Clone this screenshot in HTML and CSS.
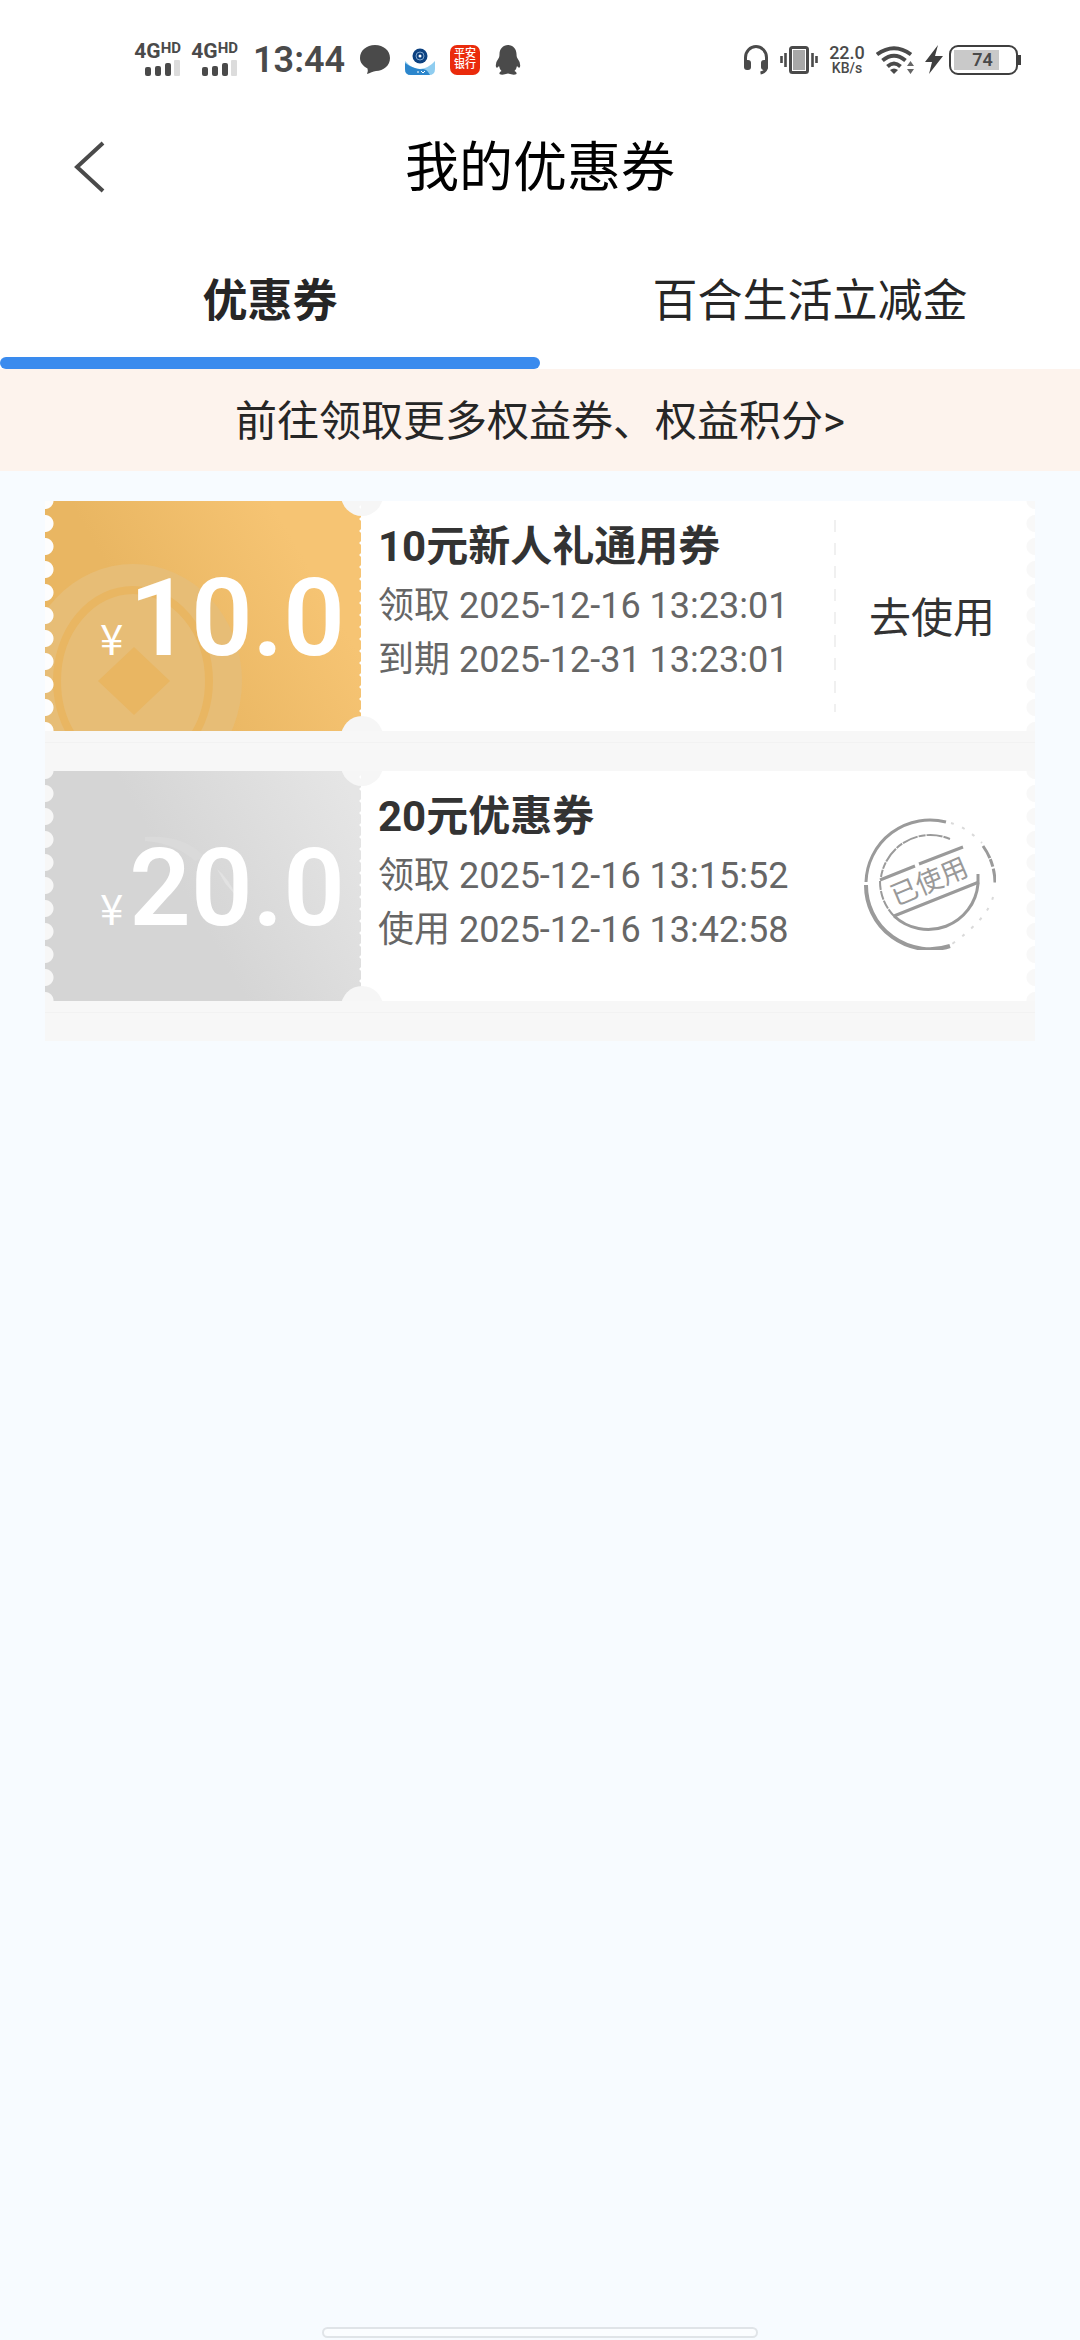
FILE: index.html
```html
<!DOCTYPE html>
<html lang="zh-CN">
<head>
<meta charset="utf-8">
<meta name="viewport" content="width=device-width, initial-scale=1">
<title>我的优惠券</title>
<link rel="stylesheet" href="styles.css">
</head>
<body>
<div class="statusbar">
  <div class="status-group status-left">
    <div class="signal">
      <span class="net">4G<span class="hd">HD</span></span>
      <svg width="36" height="18" viewBox="0 0 36 18" fill="#4a4a4a"><rect x="0" y="8" width="6" height="9" rx="2"/><rect x="10" y="7" width="6" height="10" rx="2"/><rect x="20" y="4" width="6" height="13" rx="2"/><rect x="29" y="1" width="6" height="16" rx="1" fill="#dcdcdc"/></svg>
    </div>
    <div class="signal">
      <span class="net">4G<span class="hd">HD</span></span>
      <svg width="36" height="18" viewBox="0 0 36 18" fill="#4a4a4a"><rect x="0" y="8" width="6" height="9" rx="2"/><rect x="10" y="7" width="6" height="10" rx="2"/><rect x="20" y="4" width="6" height="13" rx="2"/><rect x="29" y="1" width="6" height="16" rx="1" fill="#dcdcdc"/></svg>
    </div>
    <time class="clock">13:44</time>
    <svg width="30" height="30" viewBox="0 0 30 30" fill="#4a4a4a"><path d="M15 0C23.500 0 30 5.500 30 13S23.500 26 16 26C13 26 10 28.500 7 29Q8.500 26.500 7.500 23.500C3 21 0 17.500 0 13C0 5.500 6.500 0 15 0Z"/></svg>
    <svg width="30" height="30" viewBox="0 0 30 30"><path d="M0 16Q7 24 15 24Q24 23 30 16V24Q30 30 24 30H6Q0 30 0 24Z" fill="#8fcdf0"/><path d="M0 18Q10 25 18 24Q22 24 25 30H6Q0 30 0 24Z" fill="#2c86cc"/><circle cx="15" cy="11" r="7.500" fill="#0c4180"/><circle cx="15" cy="11" r="4" fill="none" stroke="#7fa6cf" stroke-width="1"/><circle cx="15" cy="11" r="1.500" fill="#fff"/><path d="M12 27h2M16 26l2 2 2-2" stroke="#fff" fill="none"/></svg>
    <span class="bank-icon"><span>平安</span><span>银行</span></span>
    <svg width="26" height="30" viewBox="0 0 26 30" fill="#4a4a4a"><path d="M13 0C18 0 21.500 4 21.500 9Q21.500 11 22 12.500Q26 18 25 22Q24 24 22 21Q21.500 24 19.500 26Q22 27 21.500 29Q19 30.500 13 28.500Q7 30.500 4.500 29Q4 27 6.500 26Q4.500 24 4 21Q2 24 1 22Q0 18 4 12.500Q4.500 11 4.500 9C4.500 4 8 0 13 0Z"/></svg>
  </div>
  <div class="status-group status-right">
    <svg width="26" height="30" viewBox="0 0 26 30"><path d="M2.500 19V12.500A10.500 11 0 0 1 23.500 12.500V21Q23.500 27 17.500 28" fill="none" stroke="#4a4a4a" stroke-width="3"/><rect x="1" y="15" width="7" height="10" rx="3" fill="#4a4a4a"/><rect x="18" y="15" width="7" height="10" rx="3" fill="#4a4a4a"/></svg>
    <svg width="38" height="30" viewBox="0 0 38 30"><rect x="10.500" y="2.500" width="17" height="25" rx="2" fill="#a8a8a8" stroke="#4a4a4a" stroke-width="3"/><rect x="12.500" y="4.500" width="13" height="21" fill="none" stroke="#fff"/><path d="M1.500 11v7M5.500 8v14M32.500 8v14M36.500 11v7" stroke="#4a4a4a" stroke-width="2.600"/></svg>
    <span class="speed"><span class="speed-value">22.0</span><span>KB/s</span></span>
    <svg width="38" height="30" viewBox="0 0 38 30"><g fill="none" stroke="#4a4a4a" stroke-width="4"><path d="M1 9.500Q18 -3 35 9.500"/><path d="M6.500 15.500Q18 6 29.500 15.500"/><path d="M11.500 21.500Q18 15.500 24.500 21.500"/></g><path d="M14 25Q18 22 22 25L18 29Z" fill="#4a4a4a"/><path d="M34.500 16l3.500 5h-7zM34.500 29l3.500-5h-7z" fill="#666"/></svg>
    <svg width="18" height="30" viewBox="0 0 18 30" fill="#3f3f3f"><path d="M13 0L0 17H7L4 29L18 11H10Z"/></svg>
    <span class="battery"><span class="battery-body"><span class="battery-level">74</span></span><span class="battery-tip"></span></span>
  </div>
</div>

<header class="navbar">
  <button class="back" type="button" aria-label="返回"><svg width="32" height="52" viewBox="0 0 32 52" fill="none" stroke="#4a4a4a" stroke-width="4"><path d="M29 2L3 26L29 50"/></svg></button>
  <h1 class="title">我的优惠券</h1>
</header>

<nav class="tabs">
  <button class="tab tab-active" type="button">优惠券</button>
  <button class="tab" type="button">百合生活立减金</button>
</nav>

<a class="notice" href="#">前往领取更多权益券、权益积分&gt;</a>

<main>
  <ul class="coupons">
    <li class="slot">
      <article class="coupon">
        <div class="stub">
          <svg class="coin" width="316" height="230" viewBox="0 0 316 230"><ellipse cx="88" cy="180" rx="109" ry="117" fill="#e7bd76"/><ellipse cx="88" cy="180" rx="76" ry="91" fill="none" stroke="#e9b662" stroke-width="8"/><path d="M89 146L125 180L89 214L53 180Z" fill="#e9b662"/></svg>
          <p class="amount"><span class="yen">¥</span>10.0</p>
        </div>
        <div class="info">
          <h2 class="name">10元新人礼通用券</h2>
          <p class="date">领取 2025-12-16 13:23:01</p>
          <p class="date">到期 2025-12-31 13:23:01</p>
        </div>
        <div class="action action-open"><button class="use" type="button">去使用</button></div>
      </article>
    </li>
    <li class="slot">
      <article class="coupon coupon-used">
        <div class="stub">
          <svg class="coin" width="316" height="230" viewBox="0 0 316 230"><path d="M100 66Q140 64 160 86L150 90Q130 72 100 70Z" fill="#dadada"/><path d="M172 98Q184 108 191 125L180 112Z" fill="#e2e2e2"/></svg>
          <p class="amount"><span class="yen">¥</span>20.0</p>
        </div>
        <div class="info">
          <h2 class="name">20元优惠券</h2>
          <p class="date">领取 2025-12-16 13:15:52</p>
          <p class="date">使用 2025-12-16 13:42:58</p>
        </div>
        <div class="action">
          <svg class="stamp" width="132" height="132" viewBox="0 0 132 132" fill="none" stroke="#9a9a9a">
            <path d="M82 4A64 64 0 0 0 2 64" stroke-width="3"/>
            <path d="M2 67A64 64 0 0 0 86 128" stroke-width="4"/>
            <path d="M119 28A64 64 0 0 1 131 65" stroke-width="3" stroke-dasharray="14 1 8 2"/>
            <path d="M87 5Q102 9 118 25M129 79Q124 100 88 126" stroke="#dadada" stroke-width="2" stroke-dasharray="3 9"/>
            <path d="M86 21A50 50 0 0 0 17 59" stroke-width="2" stroke-dasharray="7 1 16 1"/>
            <path d="M16 63A50 50 0 0 0 32 100" stroke-width="2" stroke-dasharray="9 1"/>
            <path d="M30 98A50 50 0 0 0 114 66V56" stroke-width="3"/>
            <path d="M16 62L51 48M55 46L99 29M30 98L115 64" stroke-width="3"/>
            <text class="stamp-text" x="65" y="73" text-anchor="middle" transform="rotate(-23 65 63)">已使用</text>
          </svg>
        </div>
      </article>
    </li>
  </ul>
</main>
<div class="gesture"></div>
</body>
</html>
```

FILE: styles.css
```css
* { box-sizing: border-box; }

body {
  margin: 0;
  min-height: 100vh;
  background: #f7fbff;
  color: #333;
  font-family: Roboto, "Noto Sans CJK SC", sans-serif;
}

h1, h2, p, ul { margin: 0; padding: 0; }
ul { list-style: none; }
svg { display: block; flex: none; }
button { border: 0; padding: 0; background: none; color: inherit; font: inherit; }

/* status bar */
.statusbar {
  display: flex;
  justify-content: space-between;
  align-items: center;
  height: 120px;
  padding: 0 59px 0 134px;
  background: #fff;
  color: #4a4a4a;
}
.status-group { display: flex; align-items: center; }
.status-left { gap: 15px; }
.status-right { gap: 11px; }
.signal { display: flex; flex-direction: column; align-items: flex-end; width: 47px; margin-right: -5px; }
.net { display: flex; align-items: flex-start; font-size: 21px; font-weight: 700; line-height: 16px; }
.hd { font-size: 15px; line-height: 10px; }
.clock { margin-left: 5px; font-size: 36px; font-weight: 600; line-height: 42px; }
.bank-icon {
  display: flex;
  flex-direction: column;
  align-items: center;
  width: 30px;
  height: 30px;
  padding-top: 3px;
  border-radius: 7px;
  background: #ea2b0c;
  color: #fff;
  font-size: 11px;
  font-weight: 500;
  line-height: 11px;
}
.speed { display: flex; flex-direction: column; align-items: center; width: 36px; font-size: 14px; font-weight: 500; line-height: 14px; }
.speed-value { font-size: 18px; line-height: 16px; }
.battery { display: flex; align-items: center; margin-left: -5px; }
.battery-body { width: 69px; height: 30px; padding: 3px; border: 2px solid #3f3f3f; border-radius: 9px; }
.battery-level { display: block; width: 45px; padding-left: 12px; background: #c9c9c9; font-size: 18px; font-weight: 600; line-height: 20px; text-align: center; }
.battery-tip { width: 3px; height: 10px; background: #3f3f3f; }

/* title bar */
.navbar {
  display: grid;
  grid-template-columns: 120px 1fr 120px;
  align-items: center;
  height: 94px;
  background: #fff;
}
.back { display: flex; justify-content: flex-end; padding-right: 14px; }
.title { padding-top: 4px; color: #000; font-size: 54px; font-weight: 400; line-height: 72px; text-align: center; }

/* tabs */
.tabs { display: flex; background: #fff; }
.tab { position: relative; flex: 1; padding: 58px 0 37px; color: #262626; font-size: 45px; line-height: 60px; }
.tab-active { font-weight: 700; }
.tab-active::after {
  content: "";
  position: absolute;
  inset: auto 0 0;
  height: 12px;
  border-radius: 6px;
  background: #3a8bee;
}

.notice {
  display: block;
  padding: 23px 0 19px;
  background: #fdf3ed;
  color: #262626;
  font-size: 42px;
  line-height: 60px;
  text-align: center;
  text-decoration: none;
}

/* coupons */
.coupons { padding: 30px 45px; }
.slot {
  padding-bottom: 40px;
  background: linear-gradient(#f2f2f2, #f2f2f2) 0 241px / 100% 1px no-repeat, #f7f7f7;
}
.coupon {
  --edge: #fdfdfd;
  display: flex;
  position: relative;
  height: 230px;
  background: #fff;
  overflow: hidden;
}
.coupon-used { --edge: #f7f7f7; }
.coupon::before,
.coupon::after {
  content: "";
  position: absolute;
  z-index: 1;
  left: 296px;
  width: 42px;
  height: 42px;
  border-radius: 50%;
  background: #f6f6f6;
}
.coupon::before { top: -27px; }
.coupon::after { bottom: -27px; }

.stub {
  position: relative;
  flex: 0 0 316px;
  display: flex;
  align-items: center;
  justify-content: flex-end;
  background: linear-gradient(60deg, #e9b662 35%, #f6c473 80%);
  overflow: hidden;
}
.coupon-used .stub { background: linear-gradient(60deg, #d5d5d5 45%, #e5e5e5 95%); }
.stub::before {
  content: "";
  position: absolute;
  z-index: 1;
  inset: 0;
  background:
    radial-gradient(circle at 0 50%, var(--edge) 8px, transparent 9px) 0 -12px / 12px 23px repeat-y,
    radial-gradient(circle at 100% 50%, #fff 1px, transparent 2px) 100% 0 / 3px 12px repeat-y;
}
.coin { position: absolute; inset: 0; }
.amount { position: relative; padding: 4px 16px 0 0; color: #fff; font-size: 108px; font-weight: 600; line-height: 120px; }
.yen { margin-right: 6px; font-family: "Noto Sans CJK SC", sans-serif; font-size: 42px; font-weight: 400; line-height: 48px; }

.info { flex: 1; padding: 16px 0 0 17px; }
.name { padding-bottom: 2px; font-size: 42px; font-weight: 700; line-height: 60px; }
.date { color: #666; font-size: 36px; line-height: 54px; }

.action {
  display: flex;
  align-items: center;
  justify-content: center;
  width: 201px;
  padding: 0 9px 5px 0;
  background: radial-gradient(circle at 100% 50%, #f8f8f8 8px, transparent 9px) 100% -12px / 12px 23px repeat-y;
}
.action-open {
  padding: 5px 5px 0 0;
  background:
    repeating-linear-gradient(#f0f0f0 0 12px, transparent 12px 23px) 0 50% / 2px 192px no-repeat,
    radial-gradient(circle at 100% 50%, #f8f8f8 8px, transparent 9px) 100% -12px / 12px 23px repeat-y;
}
.use { font-size: 42px; line-height: 60px; }
.stamp-text { fill: #999; stroke: none; font-size: 27px; font-weight: 400; }

.gesture {
  position: fixed;
  bottom: 2px;
  left: 50%;
  width: 436px;
  height: 11px;
  margin-left: -218px;
  border: 2px solid #e0e4e8;
  border-radius: 6px;
  background: #fbfdff;
}
```
